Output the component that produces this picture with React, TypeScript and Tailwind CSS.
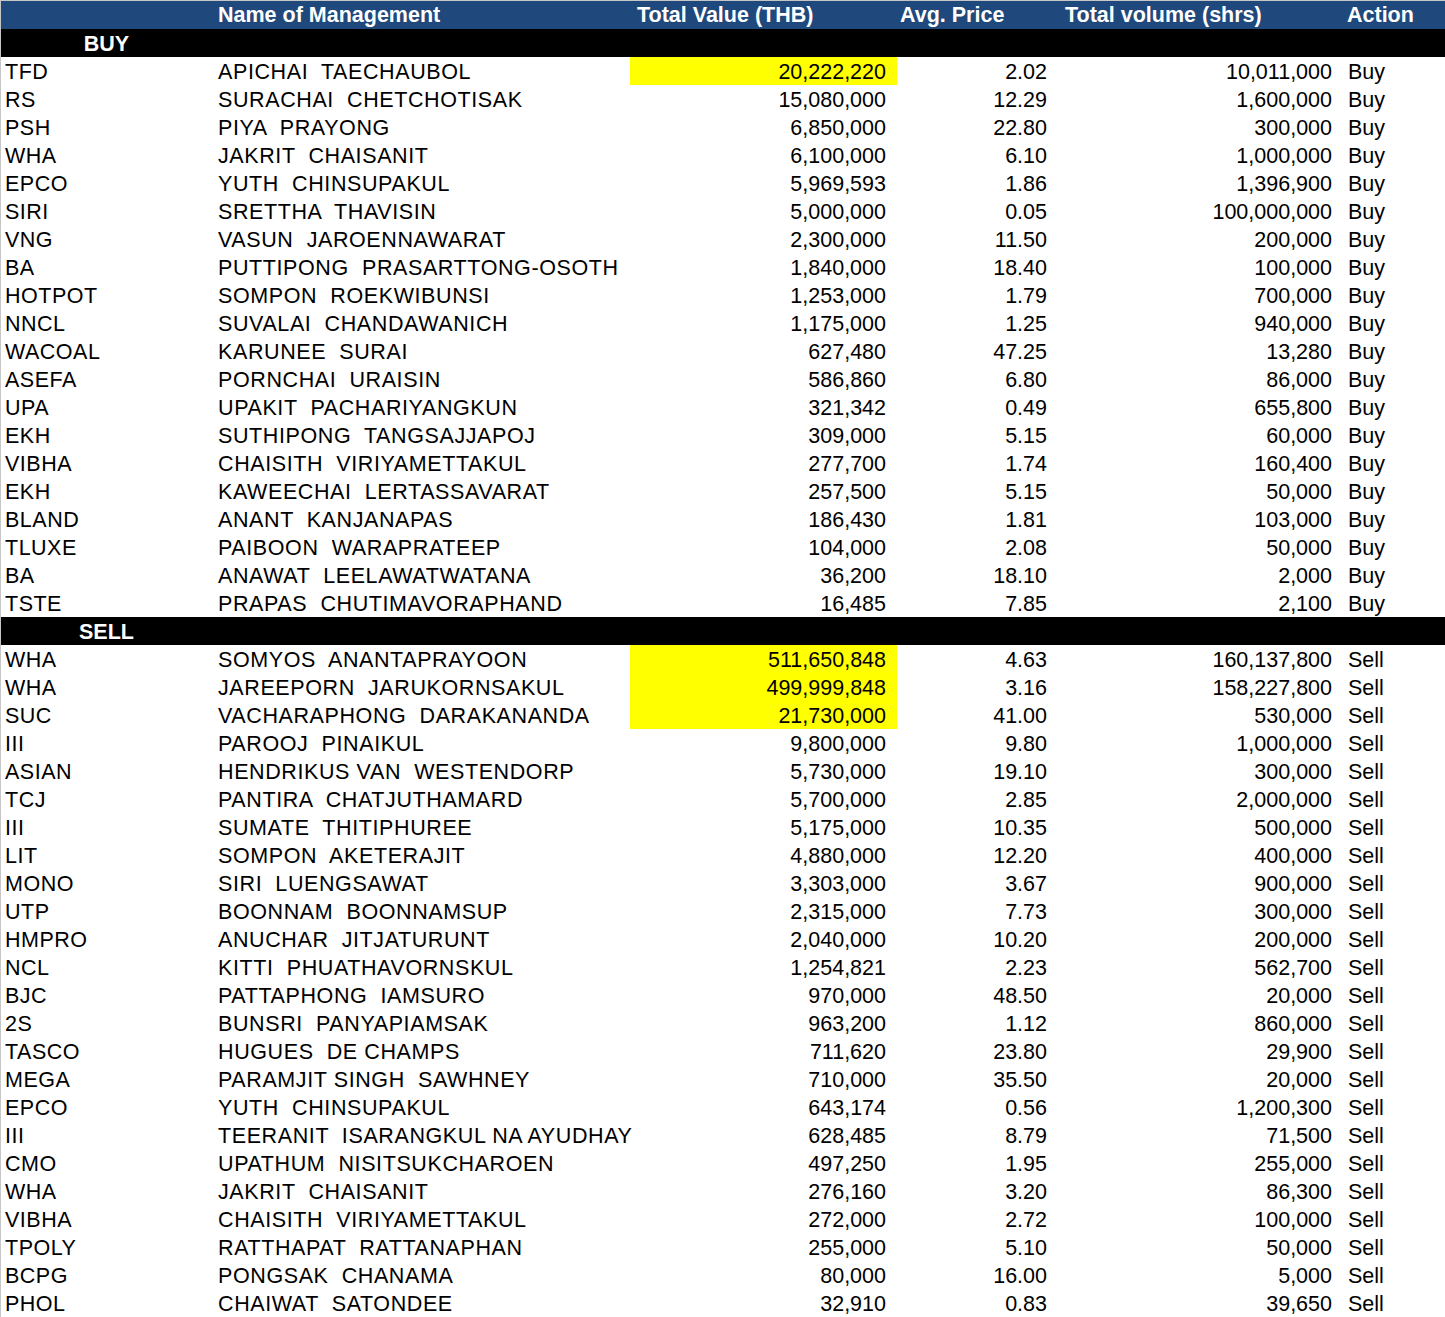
import React from "react";

type Row = [string, string, string, string, string, boolean?];

const buys: Row[] = [
  ["TFD", "APICHAI  TAECHAUBOL", "20,222,220", "2.02", "10,011,000", true],
  ["RS", "SURACHAI  CHETCHOTISAK", "15,080,000", "12.29", "1,600,000"],
  ["PSH", "PIYA  PRAYONG", "6,850,000", "22.80", "300,000"],
  ["WHA", "JAKRIT  CHAISANIT", "6,100,000", "6.10", "1,000,000"],
  ["EPCO", "YUTH  CHINSUPAKUL", "5,969,593", "1.86", "1,396,900"],
  ["SIRI", "SRETTHA  THAVISIN", "5,000,000", "0.05", "100,000,000"],
  ["VNG", "VASUN  JAROENNAWARAT", "2,300,000", "11.50", "200,000"],
  ["BA", "PUTTIPONG  PRASARTTONG-OSOTH", "1,840,000", "18.40", "100,000"],
  ["HOTPOT", "SOMPON  ROEKWIBUNSI", "1,253,000", "1.79", "700,000"],
  ["NNCL", "SUVALAI  CHANDAWANICH", "1,175,000", "1.25", "940,000"],
  ["WACOAL", "KARUNEE  SURAI", "627,480", "47.25", "13,280"],
  ["ASEFA", "PORNCHAI  URAISIN", "586,860", "6.80", "86,000"],
  ["UPA", "UPAKIT  PACHARIYANGKUN", "321,342", "0.49", "655,800"],
  ["EKH", "SUTHIPONG  TANGSAJJAPOJ", "309,000", "5.15", "60,000"],
  ["VIBHA", "CHAISITH  VIRIYAMETTAKUL", "277,700", "1.74", "160,400"],
  ["EKH", "KAWEECHAI  LERTASSAVARAT", "257,500", "5.15", "50,000"],
  ["BLAND", "ANANT  KANJANAPAS", "186,430", "1.81", "103,000"],
  ["TLUXE", "PAIBOON  WARAPRATEEP", "104,000", "2.08", "50,000"],
  ["BA", "ANAWAT  LEELAWATWATANA", "36,200", "18.10", "2,000"],
  ["TSTE", "PRAPAS  CHUTIMAVORAPHAND", "16,485", "7.85", "2,100"],
];

const sells: Row[] = [
  ["WHA", "SOMYOS  ANANTAPRAYOON", "511,650,848", "4.63", "160,137,800", true],
  ["WHA", "JAREEPORN  JARUKORNSAKUL", "499,999,848", "3.16", "158,227,800", true],
  ["SUC", "VACHARAPHONG  DARAKANANDA", "21,730,000", "41.00", "530,000", true],
  ["III", "PAROOJ  PINAIKUL", "9,800,000", "9.80", "1,000,000"],
  ["ASIAN", "HENDRIKUS VAN  WESTENDORP", "5,730,000", "19.10", "300,000"],
  ["TCJ", "PANTIRA  CHATJUTHAMARD", "5,700,000", "2.85", "2,000,000"],
  ["III", "SUMATE  THITIPHUREE", "5,175,000", "10.35", "500,000"],
  ["LIT", "SOMPON  AKETERAJIT", "4,880,000", "12.20", "400,000"],
  ["MONO", "SIRI  LUENGSAWAT", "3,303,000", "3.67", "900,000"],
  ["UTP", "BOONNAM  BOONNAMSUP", "2,315,000", "7.73", "300,000"],
  ["HMPRO", "ANUCHAR  JITJATURUNT", "2,040,000", "10.20", "200,000"],
  ["NCL", "KITTI  PHUATHAVORNSKUL", "1,254,821", "2.23", "562,700"],
  ["BJC", "PATTAPHONG  IAMSURO", "970,000", "48.50", "20,000"],
  ["2S", "BUNSRI  PANYAPIAMSAK", "963,200", "1.12", "860,000"],
  ["TASCO", "HUGUES  DE CHAMPS", "711,620", "23.80", "29,900"],
  ["MEGA", "PARAMJIT SINGH  SAWHNEY", "710,000", "35.50", "20,000"],
  ["EPCO", "YUTH  CHINSUPAKUL", "643,174", "0.56", "1,200,300"],
  ["III", "TEERANIT  ISARANGKUL NA AYUDHAY", "628,485", "8.79", "71,500"],
  ["CMO", "UPATHUM  NISITSUKCHAROEN", "497,250", "1.95", "255,000"],
  ["WHA", "JAKRIT  CHAISANIT", "276,160", "3.20", "86,300"],
  ["VIBHA", "CHAISITH  VIRIYAMETTAKUL", "272,000", "2.72", "100,000"],
  ["TPOLY", "RATTHAPAT  RATTANAPHAN", "255,000", "5.10", "50,000"],
  ["BCPG", "PONGSAK  CHANAMA", "80,000", "16.00", "5,000"],
  ["PHOL", "CHAIWAT  SATONDEE", "32,910", "0.83", "39,650"],
];

const grid =
  "grid grid-cols-[211px_418px_267px_160px_285px_103px] h-[28px]";
const cell = "pt-[2px] leading-[26px] whitespace-pre overflow-visible";

function DataRow({ r, action }: { r: Row; action: string }) {
  return (
    <div className={grid + " bg-white text-black"}>
      <div className={cell + " pl-[4px] tracking-[0.5px]"}>{r[0]}</div>
      <div className={cell + " pl-[6px] tracking-[0.6px]"}>{r[1]}</div>
      <div className={cell + " pr-[11px] text-right " + (r[5] ? "bg-[#ffff00]" : "")}>{r[2]}</div>
      <div className={cell + " pr-[10px] text-right"}>{r[3]}</div>
      <div className={cell + " pr-[10px] text-right"}>{r[4]}</div>
      <div className={cell + " pl-[6px]"}>{action}</div>
    </div>
  );
}

function Section({ label }: { label: string }) {
  return (
    <div className={grid + " bg-black text-white font-bold"}>
      <div className={cell + " text-center"}>{label}</div>
    </div>
  );
}

export default function App() {
  return (
    <div
      className="w-[1445px] h-[1317px] bg-white border-l border-t border-[#c6c6c6] overflow-hidden text-[21.5px]"
      style={{ fontFamily: '"Liberation Sans", Arial, sans-serif' }}
    >
      <div className={grid + " bg-[#1f497d] text-white font-bold h-[27px]"}>
        <div className="pt-[1px] leading-[26px]"></div>
        <div className="pt-[1px] leading-[26px] pl-[6px] whitespace-pre">Name of Management</div>
        <div className="pt-[1px] leading-[26px] pl-[7px] whitespace-pre">Total Value (THB)</div>
        <div className="pt-[1px] leading-[26px] pl-[3px] whitespace-pre">Avg. Price</div>
        <div className="pt-[1px] leading-[26px] pl-[8px] whitespace-pre">Total volume (shrs)</div>
        <div className="pt-[1px] leading-[26px] pl-[5px] whitespace-pre">Action</div>
      </div>
      <Section label="BUY" />
      {buys.map((r, i) => (
        <DataRow key={"b" + i} r={r} action="Buy" />
      ))}
      <Section label="SELL" />
      {sells.map((r, i) => (
        <DataRow key={"s" + i} r={r} action="Sell" />
      ))}
    </div>
  );
}
